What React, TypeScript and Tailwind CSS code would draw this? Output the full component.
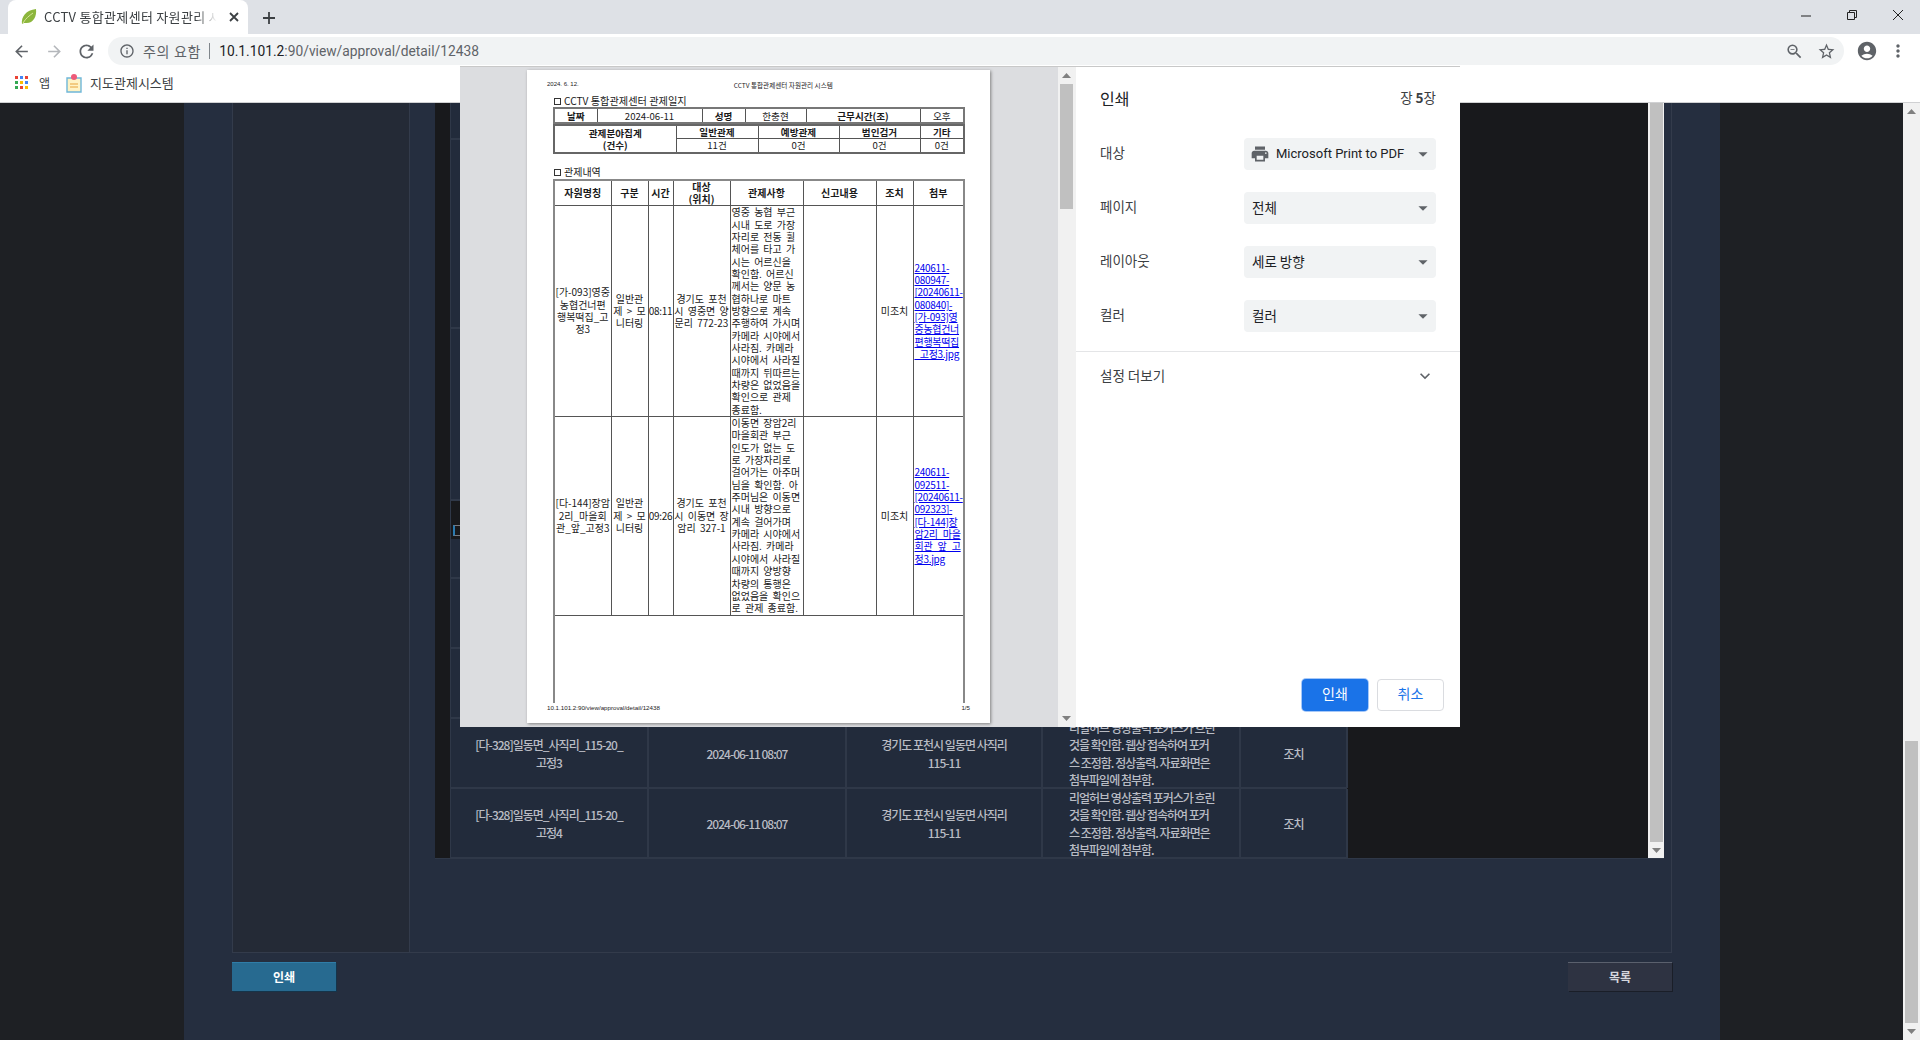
import {
  MdAccountCircle,
  MdArrowBack,
  MdArrowDropDown,
  MdArrowForward,
  MdExpandMore,
  MdInfoOutline,
  MdMoreVert,
  MdPrint,
  MdRefresh,
  MdStarBorder,
  MdZoomOut,
} from "react-icons/md";

const upperRows = ["h-[37px]", "h-[189px]", "h-[172px]"];
const lowerRows = ["h-[40px]", "h-[70px]", "h-[70px]"];

const visibleRows = [
  { name: ["[다-328]일동면_사직리_115-20_", "고정3"] },
  { name: ["[다-328]일동면_사직리_115-20_", "고정4"] },
];

const recordRows = [
  {
    name: ["[가-093]영중", "농협건너편", "행복떡집_고", "정3"],
    time: "08:11",
    place: ["경기도 포천", "시 영중면 양", "문리 772-23"],
    detail: [
      "영중 농협 부근", "시내 도로 가장", "자리로 전동 휠", "체어를 타고 가", "시는 어르신을", "확인함. 어르신",
      "께서는 양문 농", "협하나로 마트", "방향으로 계속", "주행하여 가시며", "카메라 시야에서", "사라짐. 카메라",
      "시야에서 사라질", "때까지 뒤따르는", "차량은 없었음을", "확인으로 관제", "종료함.",
    ],
    file: ["240611-", "080947-", "[20240611-", "080840]-", "[가-093]영", "중농협건너", "편행복떡집", "_고정3.jpg"],
    height: "h-[210px]",
  },
  {
    name: ["[다-144]장암", "2리_마을회", "관_앞_고정3"],
    time: "09:26",
    place: ["경기도 포천", "시 이동면 장", "암리 327-1"],
    detail: [
      "이동면 장암2리", "마을회관 부근", "인도가 없는 도", "로 가장자리로", "걸어가는 아주머", "님을 확인함. 아",
      "주머님은 이동면", "시내 방향으로", "계속 걸어가며", "카메라 시야에서", "사라짐. 카메라", "시야에서 사라질",
      "때까지 양방향", "차량의 통행은", "없었음을 확인으", "로 관제 종료함.",
    ],
    file: ["240611-", "092511-", "[20240611-", "092323]-", "[다-144]장", "암2리_마을", "회관_앞_고", "정3.jpg"],
    height: "h-[198px]",
  },
];

function Lines({ lines }: { lines: string[] }) {
  return (
    <>
      {lines.map((line) => (
        <span key={line} className="block whitespace-nowrap">
          {line}
        </span>
      ))}
    </>
  );
}

function Triangle({ down = false }: { down?: boolean }) {
  return (
    <svg width="9" height="5" viewBox="0 0 9 5" className="shrink-0">
      <path d={down ? "M0 0h9L4.5 5z" : "M0 5h9L4.5 0z"} fill="#808080" />
    </svg>
  );
}

function BrowserChrome() {
  return (
    <header className="h-[103px] bg-white border-b border-[#d0d1d3] text-[#3c4043]">
      <div className="h-[34px] bg-[#dee1e6] flex items-end">
        <div className="ml-[8px] w-[240px] h-[34px] bg-white rounded-t-[8px] flex items-center pl-[12px] pr-[9px]">
          <svg width="18" height="18" viewBox="0 0 18 18" className="shrink-0">
            <path d="M2 16C1 9 6 2 16 1c1 8-3 15-11 14-1 0-2 0-3 1z" fill="#8cb63c" />
            <path d="M3 15C6 10 9 8 13 5" stroke="#d7e59a" strokeWidth="1" fill="none" />
          </svg>
          <span className="ml-[6px] w-[173px] overflow-hidden whitespace-nowrap text-[13px] tracking-[0.3px] font-['Noto_Sans_CJK_KR',sans-serif] [mask-image:linear-gradient(to_right,black_88%,transparent)]">
            CCTV 통합관제센터 자원관리 시스템
          </span>
          <svg width="10" height="10" viewBox="0 0 10 10" className="ml-auto shrink-0">
            <path d="M1 1l8 8M9 1L1 9" stroke="#3c4043" strokeWidth="1.8" />
          </svg>
        </div>
        <svg width="14" height="14" viewBox="0 0 14 14" className="ml-[14px] mb-[9px]">
          <path d="M7 1v12M1 7h12" stroke="#3c4043" strokeWidth="1.8" />
        </svg>
        <div className="ml-auto mb-[13px] flex items-center gap-[34px] pr-[16px]">
          <svg width="12" height="12" viewBox="0 0 12 12">
            <path d="M1 7h10" stroke="#222" strokeWidth="1" />
          </svg>
          <svg width="12" height="12" viewBox="0 0 12 12" fill="none">
            <path d="M1.5 3.5h7v7h-7zM3.5 3.5v-2h7v7h-2" stroke="#222" strokeWidth="1" />
          </svg>
          <svg width="12" height="12" viewBox="0 0 12 12">
            <path d="M1 1l10 10M11 1L1 11" stroke="#222" strokeWidth="1" />
          </svg>
        </div>
      </div>
      <div className="h-[34px] flex items-center pl-[12px] pr-[10px]">
        <MdArrowBack className="w-[19px] h-[19px] text-[#5f6368]" />
        <MdArrowForward className="ml-[14px] w-[19px] h-[19px] text-[#b4b7bb]" />
        <MdRefresh className="ml-[12px] w-[21px] h-[21px] text-[#5f6368]" />
        <div className="ml-[11px] w-[1736px] h-[28px] rounded-full bg-[#f1f3f4] flex items-center pl-[11px] pr-[8px]">
          <MdInfoOutline className="w-[16px] h-[16px] text-[#5f6368]" />
          <span className="ml-[8px] text-[14px] tracking-[0.7px] text-[#5f6368] font-['Noto_Sans_CJK_KR',sans-serif]">주의 요함</span>
          <span className="ml-[8px] h-[16px] w-px bg-[#80868b]" />
          <span className="ml-[9px] text-[13.8px] text-[#5f6368] font-['Roboto',sans-serif]">
            <span className="text-[#202124]">10.1.101.2</span>:90/view/approval/detail/12438
          </span>
          <MdZoomOut className="ml-auto w-[19px] h-[19px] text-[#5f6368]" />
          <MdStarBorder className="ml-[13px] w-[19px] h-[19px] text-[#5f6368]" />
        </div>
        <MdAccountCircle className="ml-[12px] w-[22px] h-[22px] text-[#5f6368]" />
        <MdMoreVert className="ml-[10px] w-[20px] h-[20px] text-[#5f6368]" />
      </div>
      <div className="h-[30px] flex items-center pl-[15px] text-[13px] font-['Noto_Sans_CJK_KR',sans-serif]">
        <svg width="14" height="14" viewBox="0 0 14 14">
          <path d="M0 0h3v3H0z" fill="#ea4335" />
          <path d="M5 0h3v3H5z" fill="#4285f4" />
          <path d="M10 0h3v3h-3z" fill="#ea4335" />
          <path d="M0 5h3v3H0z" fill="#34a853" />
          <path d="M5 5h3v3H5z" fill="#fbbc04" />
          <path d="M10 5h3v3h-3z" fill="#4285f4" />
          <path d="M0 10h3v3H0z" fill="#34a853" />
          <path d="M5 10h3v3H5z" fill="#ea4335" />
          <path d="M10 10h3v3h-3z" fill="#fbbc04" />
        </svg>
        <span className="ml-[10px] text-[12px]">앱</span>
        <svg width="16" height="20" viewBox="0 0 16 20" className="ml-[16px]">
          <path d="M1 5h14v14H1z" fill="#fff3c4" stroke="#6fb7d9" strokeWidth="1.4" />
          <path d="M4 11h8M4 14h8" stroke="#e8a33c" strokeWidth="1.2" />
          <circle cx="8" cy="4" r="3" fill="#ee5a78" />
        </svg>
        <span className="ml-[8px]">지도관제시스템</span>
      </div>
    </header>
  );
}

function EmptyRow({ height }: { height: string }) {
  return <div className={`${height} border-b-2 border-[#2f3848] bg-[#222b3b]`} />;
}

function UnderlyingPage() {
  return (
    <main className="h-[937px] flex bg-[#1e2024] font-['Noto_Sans_CJK_KR',sans-serif]">
      <div className="w-[184px]" />
      <section className="w-[1536px] bg-[#252e3f] px-[48px]">
        <div className="h-[850px] flex border-x border-b border-[#333b4b]">
          <div className="w-[177px] bg-[#242a36] border-r border-[#333b4b]" />
          <div className="flex-1 pl-[25px] pr-[7px]">
            <div className="h-[756px] flex bg-[#18191c] pl-[15px] overflow-hidden border-b border-[#2f3848]">
              <div className="w-[897px] border-l border-[#2f3848]">
                {upperRows.map((height) => (
                  <EmptyRow key={height} height={height} />
                ))}
                <div className="h-[38px] pt-[24px] pl-[2px]">
                  <div className="w-[20px] h-[11px] border border-[#77797f] border-l-2 border-l-[#2a7ab0]" />
                </div>
                {lowerRows.map((height, index) => (
                  <EmptyRow key={index} height={height} />
                ))}
                {visibleRows.map((row, index) => (
                  <div
                    key={index}
                    className="h-[70px] grid grid-cols-[198px_198px_196px_198px_107px] border-b-2 border-[#2f3848] bg-[#222b3b] text-[12px] leading-[17.3px] tracking-[-1px] font-medium text-[#b9bcc4] text-center"
                  >
                    <div className="border-r-2 border-[#2f3848] flex items-center justify-center">
                      <div>
                        <Lines lines={row.name} />
                      </div>
                    </div>
                    <div className="border-r-2 border-[#2f3848] flex items-center justify-center">2024-06-11 08:07</div>
                    <div className="border-r-2 border-[#2f3848] flex items-center justify-center">
                      <div>
                        <Lines lines={["경기도 포천시 일동면 사직리", "115-11"]} />
                      </div>
                    </div>
                    <div className="border-r-2 border-[#2f3848] flex items-center pl-[26px] text-left">
                      <div>
                        <Lines
                          lines={[
                            "리얼허브 영상출력 포커스가 흐린",
                            "것을 확인함. 웹상 접속하여 포커",
                            "스 조정함. 정상출력. 자료화면은",
                            "첨부파일에 첨부함.",
                          ]}
                        />
                      </div>
                    </div>
                    <div className="border-r-2 border-[#2f3848] flex items-center justify-center">조치</div>
                  </div>
                ))}
              </div>
              <div className="flex-1" />
              <div className="w-[16px] bg-[#f1f1f1] flex flex-col items-center">
                <div className="w-[13px] flex-1 bg-[#c0c0c0]" />
                <div className="h-[16px] flex items-center">
                  <Triangle down />
                </div>
              </div>
            </div>
          </div>
        </div>
        <div className="mt-[9px] flex justify-between text-[12px] font-bold">
          <button className="w-[104px] h-[29px] bg-[#276a90] border-t border-[#2f7da8] text-white shadow-[1px_1px_0_#15344a]">
            인쇄
          </button>
          <button className="w-[104px] h-[29px] bg-[#2e3342] border-t border-[#5a606d] text-[#d4d6dc] shadow-[1px_1px_0_#1a1e28]">
            목록
          </button>
        </div>
      </section>
      <div className="flex-1" />
      <div className="w-[17px] bg-[#f1f1f1] flex flex-col items-center justify-between">
        <div className="h-[17px] flex items-center">
          <Triangle />
        </div>
        <div className="mt-auto w-[13px] h-[282px] bg-[#c0c0c0]" />
        <div className="h-[17px] flex items-center">
          <Triangle down />
        </div>
      </div>
    </main>
  );
}

function PaperPreview() {
  const cell = "border border-[#555] p-0 text-center align-middle";
  const head = `${cell} font-bold`;
  return (
    <div className="w-[463px] h-[653px] mt-[3px] ml-[67px] bg-white shadow-[1px_1px_3px_#808080] text-[#1a1a1a] font-['Noto_Sans_CJK_KR',sans-serif] flex flex-col pl-[26px] pr-[26px]">
      <div className="h-[25px] flex items-start text-[6px] pt-[10px] leading-[8px] -ml-[6px]">
        <span className="font-['Liberation_Sans',sans-serif]">2024. 6. 12.</span>
        <span className="ml-[155px] pt-[1px] text-[6.6px] whitespace-nowrap">CCTV 통합관제센터 자원관리 시스템</span>
      </div>
      <div className="h-[12px] text-[10.2px] leading-[12px] whitespace-nowrap">
        <span className="inline-block w-[7px] h-[7px] border border-[#333] ml-[1px] mr-[3px]" />
        CCTV 통합관제센터 관제일지
      </div>
      <table className="w-[410px] table-fixed border-collapse border-2 border-[#777] text-[9.6px] leading-[12px]">
        <colgroup>
          <col className="w-[43px]" />
          <col className="w-[105px]" />
          <col className="w-[43px]" />
          <col className="w-[61px]" />
          <col className="w-[114px]" />
          <col className="w-[44px]" />
        </colgroup>
        <tbody>
          <tr className="h-[15px]">
            <td className={head}>날짜</td>
            <td className={cell}>2024-06-11</td>
            <td className={head}>성명</td>
            <td className={cell}>한충현</td>
            <td className={head}>근무시간(조)</td>
            <td className={cell}>오후</td>
          </tr>
        </tbody>
      </table>
      <table className="w-[410px] table-fixed border-collapse border-2 border-[#666] text-[9.6px] leading-[12px]">
        <colgroup>
          <col className="w-[122px]" />
          <col className="w-[82px]" />
          <col className="w-[81px]" />
          <col className="w-[81px]" />
          <col className="w-[44px]" />
        </colgroup>
        <tbody>
          <tr className="h-[13px]">
            <td rowSpan={2} className={head}>
              관제분야집계
              <br />
              (건수)
            </td>
            <td className={head}>일반관제</td>
            <td className={head}>예방관제</td>
            <td className={head}>범인검거</td>
            <td className={head}>기타</td>
          </tr>
          <tr className="h-[14px]">
            <td className={cell}>11건</td>
            <td className={cell}>0건</td>
            <td className={cell}>0건</td>
            <td className={cell}>0건</td>
          </tr>
        </tbody>
      </table>
      <div className="mt-[11px] h-[14px] text-[10px] leading-[14px] whitespace-nowrap">
        <span className="inline-block w-[7px] h-[7px] border border-[#333] ml-[1px] mr-[3px]" />
        관제내역
      </div>
      <table className="w-[410px] table-fixed border-collapse border-2 border-b-0 border-[#888] text-[10px] leading-[12.35px] [word-spacing:2px]">
        <colgroup>
          <col className="w-[57px]" />
          <col className="w-[37px]" />
          <col className="w-[25px]" />
          <col className="w-[57px]" />
          <col className="w-[73px]" />
          <col className="w-[73px]" />
          <col className="w-[37px]" />
          <col className="w-[51px]" />
        </colgroup>
        <tbody>
          <tr className="h-[26px]">
            <td className={head}>자원명칭</td>
            <td className={head}>구분</td>
            <td className={head}>시간</td>
            <td className={head}>
              대상
              <br />
              (위치)
            </td>
            <td className={head}>관제사항</td>
            <td className={head}>신고내용</td>
            <td className={head}>조치</td>
            <td className={head}>첨부</td>
          </tr>
          {recordRows.map((row) => (
            <tr key={row.time} className={row.height}>
              <td className={cell}>
                <Lines lines={row.name} />
              </td>
              <td className={cell}>
                <Lines lines={["일반관", "제 > 모", "니터링"]} />
              </td>
              <td className={`${cell} tracking-[-0.3px]`}>{row.time}</td>
              <td className={cell}>
                <Lines lines={row.place} />
              </td>
              <td className={`${cell} text-left pl-[1px]`}>
                <Lines lines={row.detail} />
              </td>
              <td className={cell} />
              <td className={cell}>미조치</td>
              <td className={`${cell} text-left pl-[1px] tracking-[-0.3px] text-[#0000ee] underline`}>
                <Lines lines={row.file} />
              </td>
            </tr>
          ))}
          <tr className="h-[88px]">
            <td colSpan={8} className="p-0" />
          </tr>
        </tbody>
      </table>
      <div className="-ml-[6px] flex justify-between text-[6.2px] leading-[10px] font-['Liberation_Sans',sans-serif]">
        <span>10.1.101.2:90/view/approval/detail/12438</span>
        <span className="-mr-[6px]">1/5</span>
      </div>
    </div>
  );
}

const settings = [
  { label: "대상", value: "Microsoft Print to PDF", printer: true },
  { label: "페이지", value: "전체" },
  { label: "레이아웃", value: "세로 방향" },
  { label: "컬러", value: "컬러" },
];

function PrintDialog() {
  return (
    <div className="absolute left-[460px] top-[66px] w-[1000px] h-[661px] flex bg-white border-t border-[#c8c8c8] font-['Noto_Sans_CJK_KR',sans-serif]">
      <div className="w-[598px] bg-[#dcdde0] overflow-hidden">
        <PaperPreview />
      </div>
      <div className="w-[18px] pl-[2px] bg-[#f1f1f1] flex flex-col">
        <div className="h-[17px] flex items-center justify-center pr-[3px]">
          <Triangle />
        </div>
        <div className="w-[13px] h-[125px] bg-[#c0c0c0]" />
        <div className="mt-auto h-[17px] flex items-center justify-center pr-[3px]">
          <Triangle down />
        </div>
      </div>
      <div className="flex-1 flex flex-col text-[#202124]">
        <div className="h-[61px] mb-[10px] px-[24px] flex items-center justify-between">
          <span className="text-[16px]">인쇄</span>
          <span className="text-[13.5px] text-[#3c4043]">
            장 <b className="font-bold">5</b>장
          </span>
        </div>
        <div className="flex flex-col gap-[22px] px-[24px]">
          {settings.map((item) => (
            <div key={item.label} className="h-[32px] flex items-center justify-between">
              <span className="text-[13.5px] text-[#3c4043] -mt-[4px]">{item.label}</span>
              <div className="w-[192px] h-[32px] rounded-[4px] bg-[#f1f3f4] flex items-center pl-[8px] pr-[2px] text-[13.5px]">
                {item.printer && <MdPrint className="w-[20px] h-[20px] -ml-[2px] mr-[6px] text-[#5f6368]" />}
                <span className={item.printer ? "font-['Roboto',sans-serif] text-[13px]" : "-mt-[2px]"}>{item.value}</span>
                <MdArrowDropDown className="ml-auto w-[22px] h-[22px] text-[#5f6368]" />
              </div>
            </div>
          ))}
        </div>
        <div className="mt-[19px] border-t border-[#e4e5e7] h-[48px] px-[24px] flex items-center justify-between">
          <span className="text-[13.5px] text-[#3c4043]">설정 더보기</span>
          <MdExpandMore className="w-[20px] h-[20px] text-[#5f6368] mr-[1px]" />
        </div>
        <div className="mt-auto pb-[16px] pr-[16px] flex justify-end gap-[9px] text-[14px]">
          <button className="w-[66px] h-[32px] pb-[3px] rounded-[4px] bg-[#1a73e8] text-white ring-1 ring-[#a6c8f8]">인쇄</button>
          <button className="w-[67px] h-[32px] pb-[3px] rounded-[4px] border border-[#dadce0] bg-white text-[#1a73e8]">취소</button>
        </div>
      </div>
    </div>
  );
}

export default function App() {
  return (
    <div className="relative w-[1920px] h-[1040px] overflow-hidden">
      <BrowserChrome />
      <UnderlyingPage />
      <PrintDialog />
    </div>
  );
}
